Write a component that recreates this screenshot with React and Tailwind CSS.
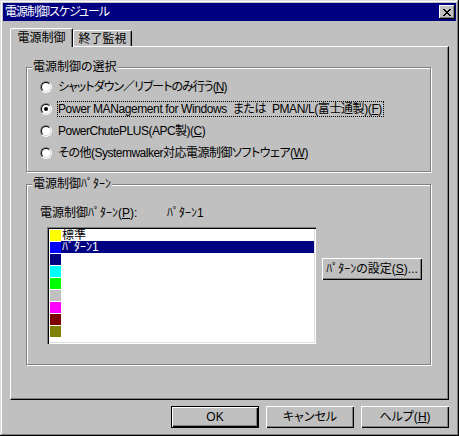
import React from "react";

const font = "font-['Liberation_Sans','Noto_Sans_CJK_JP',sans-serif] [font-feature-settings:'palt']";

function Radio({ checked }) {
    return (
        <div className="w-[12px] h-[12px] shrink-0 rounded-full border border-t-[#808080] border-l-[#808080] border-r-white border-b-white">
            <div className="w-full h-full rounded-full border border-t-black border-l-black border-r-[#dfdfdf] border-b-[#dfdfdf] bg-white flex items-center justify-center">
                {checked && <div className="w-[4px] h-[4px] rounded-full bg-black" />}
            </div>
        </div>
    );
}

function Key({ children }) {
    return <span className="underline underline-offset-[1px]">{children}</span>;
}

function Button({ children, isDefault, className = "" }) {
    const frame = isDefault
        ? "border border-black shadow-[inset_1px_1px_#fff,inset_-1px_-1px_#000,inset_-2px_-2px_#808080]"
        : "shadow-[inset_1px_1px_#fff,inset_-1px_-1px_#000,inset_-2px_-2px_#808080]";
    return (
        <div className={`h-[22px] bg-[#c0c0c0] flex items-center justify-center leading-[14px] text-black ${frame} ${className}`}>
            {children}
        </div>
    );
}

function CloseGlyph() {
    const px = [
        [0, 0], [1, 0], [6, 0], [7, 0],
        [1, 1], [2, 1], [5, 1], [6, 1],
        [2, 2], [3, 2], [4, 2], [5, 2],
        [3, 3], [4, 3],
        [2, 4], [3, 4], [4, 4], [5, 4],
        [1, 5], [2, 5], [5, 5], [6, 5],
        [0, 6], [1, 6], [6, 6], [7, 6],
    ];
    return (
        <svg width="8" height="7" viewBox="0 0 8 7" shapeRendering="crispEdges">
            {px.map(([x, y]) => (
                <rect key={`${x}-${y}`} x={x} y={y} width="1" height="1" fill="#000" />
            ))}
        </svg>
    );
}

const patterns = [
    { color: "bg-[#ffff00]", name: "標準" },
    { color: "bg-[#0000ff]", name: "ﾊﾟﾀｰﾝ1", selected: true },
    { color: "bg-[#000080]" },
    { color: "bg-[#00ffff]" },
    { color: "bg-[#00ff00]" },
    { color: "bg-[#c0c0c0]" },
    { color: "bg-[#ff00ff]" },
    { color: "bg-[#800000]" },
    { color: "bg-[#808000]" },
];

export default function App() {
    return (
        <div className={`w-[459px] h-[436px] bg-[#c0c0c0] p-[3px] flex flex-col text-[12px] text-black ${font} shadow-[inset_-1px_-1px_#000,inset_1px_1px_#dfdfdf,inset_-2px_-2px_#808080,inset_2px_2px_#fff]`}>
            {/* title bar */}
            <div className="h-[18px] bg-[#000080] flex items-center justify-between pl-[2px] pr-[1px]">
                <span className="text-white leading-[14px] tracking-[-1px]">電源制御スケジュール</span>
                <div className="w-[16px] h-[14px] bg-[#c0c0c0] flex items-center justify-center shadow-[inset_-1px_-1px_#000,inset_1px_1px_#fff,inset_-2px_-2px_#808080]">
                    <CloseGlyph />
                </div>
            </div>

            <div className="px-[7px] flex flex-col">
                {/* tabs */}
                <div className="mt-[7px] h-[18px] flex items-end">
                    <div className="relative z-10 -mb-px h-[19px] w-[63px] bg-[#c0c0c0] border-l border-t border-r border-l-white border-t-white border-r-black shadow-[inset_-1px_0_#808080] rounded-t-[2px] flex justify-center pt-[2px] leading-[14px]">
                        電源制御
                    </div>
                    <div className="h-[16px] w-[59px] border-l border-t border-r border-l-white border-t-white border-r-black shadow-[inset_-1px_0_#808080] rounded-t-[2px] flex justify-center pt-[1px] leading-[14px]">
                        終了監視
                    </div>
                </div>

                {/* tab panel */}
                <div className="h-[354px] border border-l-white border-t-white border-r-black border-b-black shadow-[inset_-1px_-1px_#808080] pt-[20px] pl-[15px]">
                    <div className="relative w-[405px] h-[105px] border border-[#808080] shadow-[inset_1px_1px_#fff,1px_1px_#fff] pt-[8px] pl-[13px]">
                        <span className="absolute left-[5px] -top-[8px] px-[1px] bg-[#c0c0c0] leading-[14px]">電源制御の選択</span>
                        <div className="h-[22px] flex items-center">
                            <Radio />
                            <span className="ml-[5px] border border-transparent pr-[1px] leading-[14px] tracking-[-1px]">シャットダウン／リブートのみ行う(<Key>N</Key>)</span>
                        </div>
                        <div className="h-[22px] flex items-center">
                            <Radio checked />
                            <span className="ml-[5px] border border-dotted border-black pr-[1px] leading-[14px] whitespace-pre tracking-[-0.4px]">Power MANagement for Windows  または  PMAN/L(富士通製)(<Key>F</Key>)</span>
                        </div>
                        <div className="h-[22px] flex items-center">
                            <Radio />
                            <span className="ml-[5px] border border-transparent pr-[1px] leading-[14px] tracking-[-0.5px]">PowerChutePLUS(APC製)(<Key>C</Key>)</span>
                        </div>
                        <div className="h-[22px] flex items-center">
                            <Radio />
                            <span className="ml-[5px] border border-transparent pr-[1px] leading-[14px] tracking-[-0.5px]">その他(Systemwalker対応電源制御ソフトウェア(<Key>W</Key>)</span>
                        </div>
                    </div>

                    <div className="relative mt-[12px] w-[405px] h-[181px] border border-[#808080] shadow-[inset_1px_1px_#fff,1px_1px_#fff] pt-[21px] pl-[13px]">
                        <span className="absolute left-[5px] -top-[8px] px-[1px] bg-[#c0c0c0] leading-[14px]">電源制御ﾊﾟﾀｰﾝ</span>
                        <div className="flex leading-[14px]">
                            <span className="w-[127px]">電源制御ﾊﾟﾀｰﾝ(<Key>P</Key>):</span>
                            <span>ﾊﾟﾀｰﾝ1</span>
                        </div>
                        <div className="mt-[7px] ml-[7px] flex items-start">
                            <div className="w-[269px] h-[117px] bg-white p-[2px] shadow-[inset_1px_1px_#808080,inset_2px_2px_#000,inset_-1px_-1px_#fff,inset_-2px_-2px_#dfdfdf]">
                                {patterns.map((p, i) => (
                                    <div key={i} className="h-[12px] flex overflow-hidden">
                                        <div className={`ml-[1px] mt-[1px] w-[11px] h-[11px] ${p.color}`} />
                                        <div className={`flex-1 pl-[1px] leading-[12px] overflow-hidden ${p.selected ? "bg-[#000080] text-white" : ""}`}>
                                            {p.name}
                                        </div>
                                    </div>
                                ))}
                            </div>
                            <Button className="mt-[31px] ml-[6px] w-[100px]">
                                ﾊﾟﾀｰﾝの設定(<Key>S</Key>)...
                            </Button>
                        </div>
                    </div>
                </div>

                {/* dialog buttons */}
                <div className="mt-[6px] flex justify-end gap-[7px]">
                    <Button isDefault className="w-[88px]">OK</Button>
                    <Button className="w-[88px]">キャンセル</Button>
                    <Button className="w-[88px]">ヘルプ(<Key>H</Key>)</Button>
                </div>
            </div>
        </div>
    );
}
